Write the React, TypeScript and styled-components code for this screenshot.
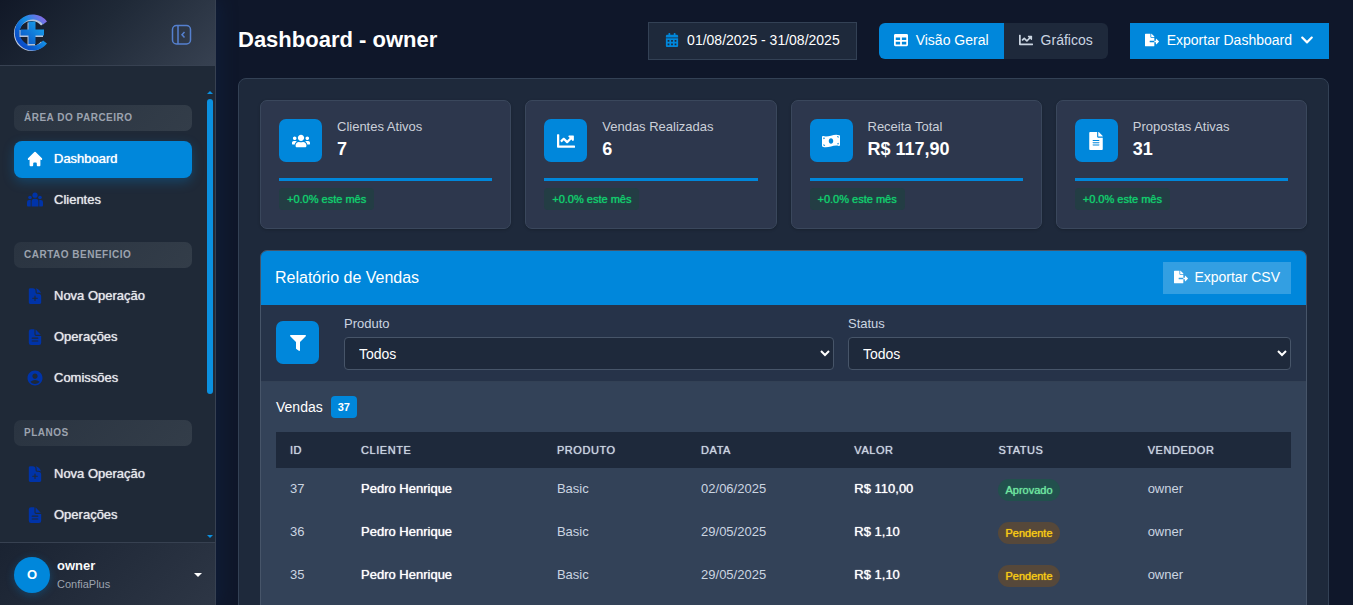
import React from 'react';
import styled, { createGlobalStyle, css } from 'styled-components';
import {
  FaCalendarAlt, FaChartLine, FaChevronDown, FaFileAlt, FaFileExport,
  FaFilter, FaMoneyBillWave, FaTable, FaUsers,
} from 'react-icons/fa';
import { HiHome } from 'react-icons/hi';
import { HiDocumentPlus } from 'react-icons/hi2';
import { IoDocumentText } from 'react-icons/io5';
import { MdAccountCircle } from 'react-icons/md';

const blue = '#0087db';

const GlobalStyle = createGlobalStyle`
  *, *::before, *::after { box-sizing: border-box; }
  html, body, #root { height: 100%; }
  body {
    margin: 0;
    overflow: hidden;
    background: #0f172a;
    color: #fff;
    font: 14px/20px "Liberation Sans", Arial, sans-serif;
  }
  button, select { font: inherit; color: inherit; }
  h1, h2, h3, p, ul { margin: 0; padding: 0; }
  ul { list-style: none; }
`;

/* Medium weight for a family that only ships regular and bold. */
const medium = css`
  font-weight: 500;
  text-shadow: 0 0 1px currentColor;
`;

const Shell = styled.div`
  display: grid;
  grid-template-rows: minmax(0, 1fr);
  grid-template-columns: 216px minmax(0, 1fr);
  height: 100vh;
  overflow: hidden;
`;

const Sidebar = styled.aside`
  display: flex;
  flex-direction: column;
  min-height: 0;
  background: #1f2937;
  border-right: 1px solid #374151;
  box-shadow: 4px 0 16px rgba(15, 40, 80, 0.4);
`;

const Brand = styled.header`
  display: flex;
  flex: none;
  align-items: center;
  justify-content: space-between;
  height: 66px;
  padding: 0 23px 0 13px;
  background: linear-gradient(135deg, #111827, #1f2937 45%, #374151);
  border-bottom: 1px solid #374151;
`;

const CollapseButton = styled.button`
  display: flex;
  margin-top: 4px;
  padding: 0;
  border: 0;
  background: none;
  color: #5580cf;
`;

const NavArea = styled.div`
  display: grid;
  grid-template-rows: minmax(0, 1fr);
  grid-template-columns: minmax(0, 1fr) 8px;
  flex: 1;
  min-height: 0;
  padding: 24px 1px 0 0;
`;

const Nav = styled.nav`
  min-height: 0;
  overflow: hidden;
  padding: 15px 14px 0;
`;

const Section = styled.section`
  margin-bottom: 23px;
`;

const SectionTitle = styled.h3`
  height: 26px;
  margin-bottom: 10px;
  padding: 0 10px;
  border-radius: 7px;
  background: linear-gradient(135deg, #2a3441, #333d49);
  color: #9ca3af;
  font-size: 10px;
  line-height: 25px;
  letter-spacing: 0.05em;
  text-transform: uppercase;
`;

const NavList = styled.ul`
  display: grid;
  gap: 4px;
`;

const NavLink = styled.a<{ $active?: boolean }>`
  ${medium}
  display: flex;
  align-items: center;
  gap: 10px;
  height: 37px;
  padding: 0 12px 2px;
  border-radius: 8px;
  color: #e5e7eb;
  font-size: 13px;
  text-decoration: none;
  svg { color: #0033a8; font-size: 18px; }
  ${({ $active }) => $active && css`
    background: ${blue};
    color: #fff;
    box-shadow: 0 4px 12px rgba(0, 135, 219, 0.3);
    svg { color: #fff; }
  `}
`;

const ScrollTrack = styled.div`
  display: flex;
  flex-direction: column;
  align-items: center;
  padding: 1px 0 4px;
`;

const ScrollThumb = styled.div`
  flex: none;
  width: 6px;
  height: 66%;
  margin: 5px 0 auto;
  border-radius: 3px;
  background: #0b90e0;
`;

const Triangle = styled.svg`
  flex: none;
  display: block;
`;

const UserBar = styled.button`
  display: flex;
  flex: none;
  align-items: center;
  gap: 7px;
  height: 63px;
  padding: 2px 13px 0 14px;
  border: 0;
  border-top: 1px solid #374151;
  background: linear-gradient(135deg, #1a2332, #2d3645);
  text-align: left;
`;

const Avatar = styled.span`
  display: grid;
  place-items: center;
  width: 36px;
  height: 36px;
  border-radius: 50%;
  background: ${blue};
  box-shadow: 0 2px 8px rgba(0, 135, 219, 0.3);
  font-size: 13px;
  font-weight: 700;
`;

const UserText = styled.span`
  display: grid;
  flex: 1;
  font-size: 11px;
  line-height: 18px;
  color: #9ca3af;
  strong { color: #f9fafb; font-size: 13px; }
`;

const Main = styled.main`
  min-width: 0;
  padding: 22px 24px 0 22px;
`;

const Topbar = styled.header`
  display: flex;
  align-items: center;
  gap: 22px;
  height: 38px;
  margin-bottom: 18px;
`;

const PageTitle = styled.h1`
  margin-right: auto;
  padding-bottom: 2px;
  font-size: 22px;
  line-height: 32px;
`;

const DateRange = styled.button`
  display: flex;
  align-items: center;
  gap: 8px;
  height: 38px;
  padding: 0 16px 2px;
  border: 1px solid #334155;
  background: #1e293b;
  white-space: nowrap;
  svg { color: ${blue}; }
`;

const TabGroup = styled.div`
  display: flex;
  overflow: hidden;
  border-radius: 6px;
`;

const Tab = styled.button<{ $active?: boolean }>`
  display: flex;
  align-items: center;
  gap: 8px;
  height: 36px;
  padding: 0 15px 2px;
  border: 0;
  background: ${({ $active }) => ($active ? blue : '#1e293b')};
  color: ${({ $active }) => ($active ? '#fff' : '#cbd5e1')};
  white-space: nowrap;
`;

const ExportButton = styled.button`
  display: flex;
  align-items: center;
  gap: 8px;
  height: 36px;
  padding: 0 15px 2px;
  border: 0;
  background: ${blue};
  white-space: nowrap;
`;

const Panel = styled.div`
  padding: 21px;
  border: 1px solid #334155;
  border-radius: 8px;
  background: #1e293b;
`;

const Stats = styled.div`
  display: grid;
  grid-template-columns: repeat(4, minmax(0, 1fr));
  gap: 14px;
  margin-bottom: 21px;
`;

const StatCard = styled.article`
  height: 129px;
  padding: 18px;
  border: 1px solid #3a475c;
  border-radius: 7px;
  background: #2d374d;
  box-shadow: 0 1px 3px rgba(0, 0, 0, 0.2);
`;

const StatHead = styled.div`
  display: flex;
  gap: 15px;
  padding-bottom: 15px;
  border-bottom: 3px solid ${blue};
`;

const IconTile = styled.span`
  display: grid;
  flex: none;
  place-items: center;
  width: 43px;
  height: 43px;
  border-radius: 7px;
  background: ${blue};
  font-size: 18px;
`;

const StatLabel = styled.p`
  color: #cbd0d9;
  font-size: 13px;
  line-height: 16px;
`;

const StatValue = styled.p`
  font-size: 18px;
  font-weight: 700;
  line-height: 28px;
`;

const Trend = styled.span`
  ${medium}
  display: inline-block;
  margin-top: 7px;
  padding: 0 8px;
  border-radius: 4px;
  background: #233d44;
  color: #12cf6d;
  font-size: 11px;
  line-height: 22px;
`;

const Report = styled.section`
  overflow: hidden;
  border: 1px solid #475569;
  border-radius: 7px;
  background: #334258;
`;

const ReportHead = styled.header`
  display: flex;
  align-items: center;
  justify-content: space-between;
  height: 54px;
  padding: 0 15px 0 14px;
  background: ${blue};
`;

const ReportTitle = styled.h2`
  font-size: 16px;
  font-weight: 500;
`;

const CsvButton = styled.button`
  display: flex;
  align-items: center;
  gap: 6px;
  height: 32px;
  padding: 0 11px 2px;
  border: 0;
  background: #339fe2;
`;

const Filters = styled.form`
  display: flex;
  gap: 14px;
  height: 77px;
  padding: 10px 15px;
  border-bottom: 1px solid #334155;
  background: #263349;
`;

const FilterButton = styled.button`
  display: grid;
  flex: none;
  place-items: center;
  width: 43px;
  height: 43px;
  margin: 6px 11px 0 0;
  padding: 0;
  border: 0;
  border-radius: 7px;
  background: ${blue};
  font-size: 16px;
`;

const Field = styled.label<{ $grow: number }>`
  flex: ${({ $grow }) => $grow} 1 0;
  min-width: 0;
  color: #cbd5e1;
  font-size: 13px;
  line-height: 17px;
`;

const Select = styled.select`
  display: block;
  width: 100%;
  height: 33px;
  margin-top: 5px;
  padding: 0 10px;
  border: 1px solid #475569;
  border-radius: 4px;
  background: #1e293b;
  color: #fff;
  font-size: 14px;
`;

const Sales = styled.div`
  padding: 14px 15px;
`;

const SalesTitle = styled.h3`
  display: flex;
  align-items: center;
  gap: 8px;
  margin-bottom: 14px;
  font-size: 14px;
  font-weight: 500;
  line-height: 22px;
`;

const Count = styled.span`
  padding: 0 7px;
  border-radius: 4px;
  background: ${blue};
  font-size: 11px;
  font-weight: 700;
`;

const Table = styled.table`
  width: 100%;
  border-collapse: collapse;
  table-layout: fixed;
  text-align: left;
`;

const Th = styled.th<{ $width: number }>`
  ${medium}
  width: ${({ $width }) => $width}%;
  height: 36px;
  padding: 0 14px;
  background: #1e293b;
  color: #cbd5e1;
  font-size: 11px;
  letter-spacing: 0.05em;
  text-transform: uppercase;
`;

const Td = styled.td<{ $strong?: boolean }>`
  height: 43px;
  padding: 0 14px 2px;
  color: #cbd5e1;
  font-size: 13px;
  ${({ $strong }) => $strong && css`
    ${medium}
    color: #fff;
  `}
`;

const StatusTd = styled(Td)`
  padding-bottom: 0;
`;

const StatusPill = styled.span<{ $ok: boolean }>`
  ${medium}
  display: inline-block;
  padding: 0 7px;
  border-radius: 11px;
  background: ${({ $ok }) => ($ok ? '#22504d' : '#56483a')};
  color: ${({ $ok }) => ($ok ? '#6ee7a0' : '#facc15')};
  font-size: 11px;
  line-height: 22px;
`;

function Logo() {
  return (
    <svg width="37" height="38" viewBox="0 0 37 38" role="img" aria-label="ConfiaPlus">
      <defs>
        <linearGradient id="ring" x1="0" y1="1" x2="1" y2="0">
          <stop offset="0" stopColor="#0b3fc0" />
          <stop offset="0.3" stopColor="#0a5fd0" />
          <stop offset="0.6" stopColor="#1590e4" />
          <stop offset="1" stopColor="#9068e6" />
        </linearGradient>
        <linearGradient id="cross" x1="0" y1="1" x2="1" y2="0">
          <stop offset="0" stopColor="#0a50c4" />
          <stop offset="1" stopColor="#18a8ee" />
        </linearGradient>
      </defs>
      <path d="M30 10A15 15 0 1 0 30 29" fill="none" stroke="#b4c2d8" strokeWidth="5" />
      <path d="M32 9A15.5 15.5 0 1 0 32 28" fill="none" stroke="url(#ring)" strokeWidth="5" />
      <path d="M14.500 8.500h7.500v7.500h8v7h-8v8.500h-7.500v-8.500h-8v-7h8z" fill="#b4c2d8" />
      <path d="M15.500 7.500h7v8h8.500v6h-8.500v8.500h-7v-8.500h-8v-6h8z" fill="url(#cross)" />
    </svg>
  );
}

function CollapseIcon() {
  return (
    <svg width="21" height="22" viewBox="0 0 21 22" fill="none" stroke="currentColor" strokeWidth="1.500" aria-hidden="true">
      <rect x="1.500" y="1.500" width="18" height="18.500" rx="4" />
      <path d="M7 1.500V20M13.500 8L11 10.700L13.500 13.500" />
    </svg>
  );
}

function PeopleIcon() {
  return (
    <svg width="18" height="18" viewBox="0 0 18 18" fill="currentColor" aria-hidden="true">
      <circle cx="9" cy="4.200" r="2.600" />
      <circle cx="4" cy="6.500" r="1.800" />
      <circle cx="14" cy="6.500" r="1.800" />
      <path d="M5.600 15.600V10.500a2.800 2.800 0 0 1 2.800-2.800h1.200a2.800 2.800 0 0 1 2.800 2.800V15.600z" />
      <path d="M4.700 9H3.200A2.200 2.200 0 0 0 1 11.200V14.600a1 1 0 0 0 1 1H4.700z" />
      <path d="M13.300 9H14.800A2.200 2.200 0 0 1 17 11.200V14.600a1 1 0 0 1-1 1H13.300z" />
    </svg>
  );
}

function Arrow({ up }: { up?: boolean }) {
  return (
    <Triangle width="6" height="3" viewBox="0 0 6 3" aria-hidden="true">
      <path d={up ? 'M0 3L3 0L6 3Z' : 'M0 0L3 3L6 0Z'} fill="#0b90e0" />
    </Triangle>
  );
}

const sections: { title: string; items: { label: string; icon: React.ComponentType; active?: boolean }[] }[] = [
  { title: 'Área do Parceiro', items: [
    { label: 'Dashboard', icon: HiHome, active: true },
    { label: 'Clientes', icon: PeopleIcon },
  ] },
  { title: 'Cartao Beneficio', items: [
    { label: 'Nova Operação', icon: HiDocumentPlus },
    { label: 'Operações', icon: IoDocumentText },
    { label: 'Comissões', icon: MdAccountCircle },
  ] },
  { title: 'Planos', items: [
    { label: 'Nova Operação', icon: HiDocumentPlus },
    { label: 'Operações', icon: IoDocumentText },
  ] },
];

const stats: { label: string; value: string; icon: React.ComponentType }[] = [
  { label: 'Clientes Ativos', value: '7', icon: FaUsers },
  { label: 'Vendas Realizadas', value: '6', icon: FaChartLine },
  { label: 'Receita Total', value: 'R$ 117,90', icon: FaMoneyBillWave },
  { label: 'Propostas Ativas', value: '31', icon: FaFileAlt },
];

const columns: [string, number][] = [
  ['ID', 7], ['Cliente', 19.3], ['Produto', 14.2], ['Data', 15.1],
  ['Valor', 14.2], ['Status', 14.7], ['Vendedor', 15.5],
];

const sales = [
  { id: 37, date: '02/06/2025', value: 'R$ 110,00', status: 'Aprovado' },
  { id: 36, date: '29/05/2025', value: 'R$ 1,10', status: 'Pendente' },
  { id: 35, date: '29/05/2025', value: 'R$ 1,10', status: 'Pendente' },
];

export default function App() {
  return (
    <>
      <GlobalStyle />
      <Shell>
        <Sidebar>
          <Brand>
            <Logo />
            <CollapseButton type="button" aria-label="Recolher menu">
              <CollapseIcon />
            </CollapseButton>
          </Brand>
          <NavArea>
            <Nav>
              {sections.map((section) => (
                <Section key={section.title}>
                  <SectionTitle>{section.title}</SectionTitle>
                  <NavList>
                    {section.items.map(({ label, icon: Icon, active }) => (
                      <li key={label}>
                        <NavLink href="#" $active={active}><Icon />{label}</NavLink>
                      </li>
                    ))}
                  </NavList>
                </Section>
              ))}
            </Nav>
            <ScrollTrack>
              <Arrow up />
              <ScrollThumb />
              <Arrow />
            </ScrollTrack>
          </NavArea>
          <UserBar type="button">
            <Avatar>O</Avatar>
            <UserText><strong>owner</strong>ConfiaPlus</UserText>
            <svg width="8" height="4" viewBox="0 0 8 4" aria-hidden="true">
              <path d="M0 0H8L4 4Z" fill="#fff" />
            </svg>
          </UserBar>
        </Sidebar>

        <Main>
          <Topbar>
            <PageTitle>Dashboard - owner</PageTitle>
            <DateRange type="button"><FaCalendarAlt />01/08/2025 - 31/08/2025</DateRange>
            <TabGroup>
              <Tab type="button" $active><FaTable />Visão Geral</Tab>
              <Tab type="button"><FaChartLine />Gráficos</Tab>
            </TabGroup>
            <ExportButton type="button"><FaFileExport />Exportar Dashboard<FaChevronDown /></ExportButton>
          </Topbar>

          <Panel>
            <Stats>
              {stats.map(({ label, value, icon: Icon }) => (
                <StatCard key={label}>
                  <StatHead>
                    <IconTile><Icon /></IconTile>
                    <div>
                      <StatLabel>{label}</StatLabel>
                      <StatValue>{value}</StatValue>
                    </div>
                  </StatHead>
                  <Trend>+0.0% este mês</Trend>
                </StatCard>
              ))}
            </Stats>

            <Report>
              <ReportHead>
                <ReportTitle>Relatório de Vendas</ReportTitle>
                <CsvButton type="button"><FaFileExport />Exportar CSV</CsvButton>
              </ReportHead>
              <Filters>
                <FilterButton type="button" aria-label="Filtrar"><FaFilter /></FilterButton>
                <Field $grow={490}>
                  Produto
                  <Select><option>Todos</option></Select>
                </Field>
                <Field $grow={443}>
                  Status
                  <Select><option>Todos</option></Select>
                </Field>
              </Filters>
              <Sales>
                <SalesTitle>Vendas <Count>37</Count></SalesTitle>
                <Table>
                  <thead>
                    <tr>{columns.map(([name, width]) => <Th key={name} $width={width}>{name}</Th>)}</tr>
                  </thead>
                  <tbody>
                    {sales.map((sale) => (
                      <tr key={sale.id}>
                        <Td>{sale.id}</Td>
                        <Td $strong>Pedro Henrique</Td>
                        <Td>Basic</Td>
                        <Td>{sale.date}</Td>
                        <Td $strong>{sale.value}</Td>
                        <StatusTd><StatusPill $ok={sale.status === 'Aprovado'}>{sale.status}</StatusPill></StatusTd>
                        <Td>owner</Td>
                      </tr>
                    ))}
                  </tbody>
                </Table>
              </Sales>
            </Report>
          </Panel>
        </Main>
      </Shell>
    </>
  );
}
